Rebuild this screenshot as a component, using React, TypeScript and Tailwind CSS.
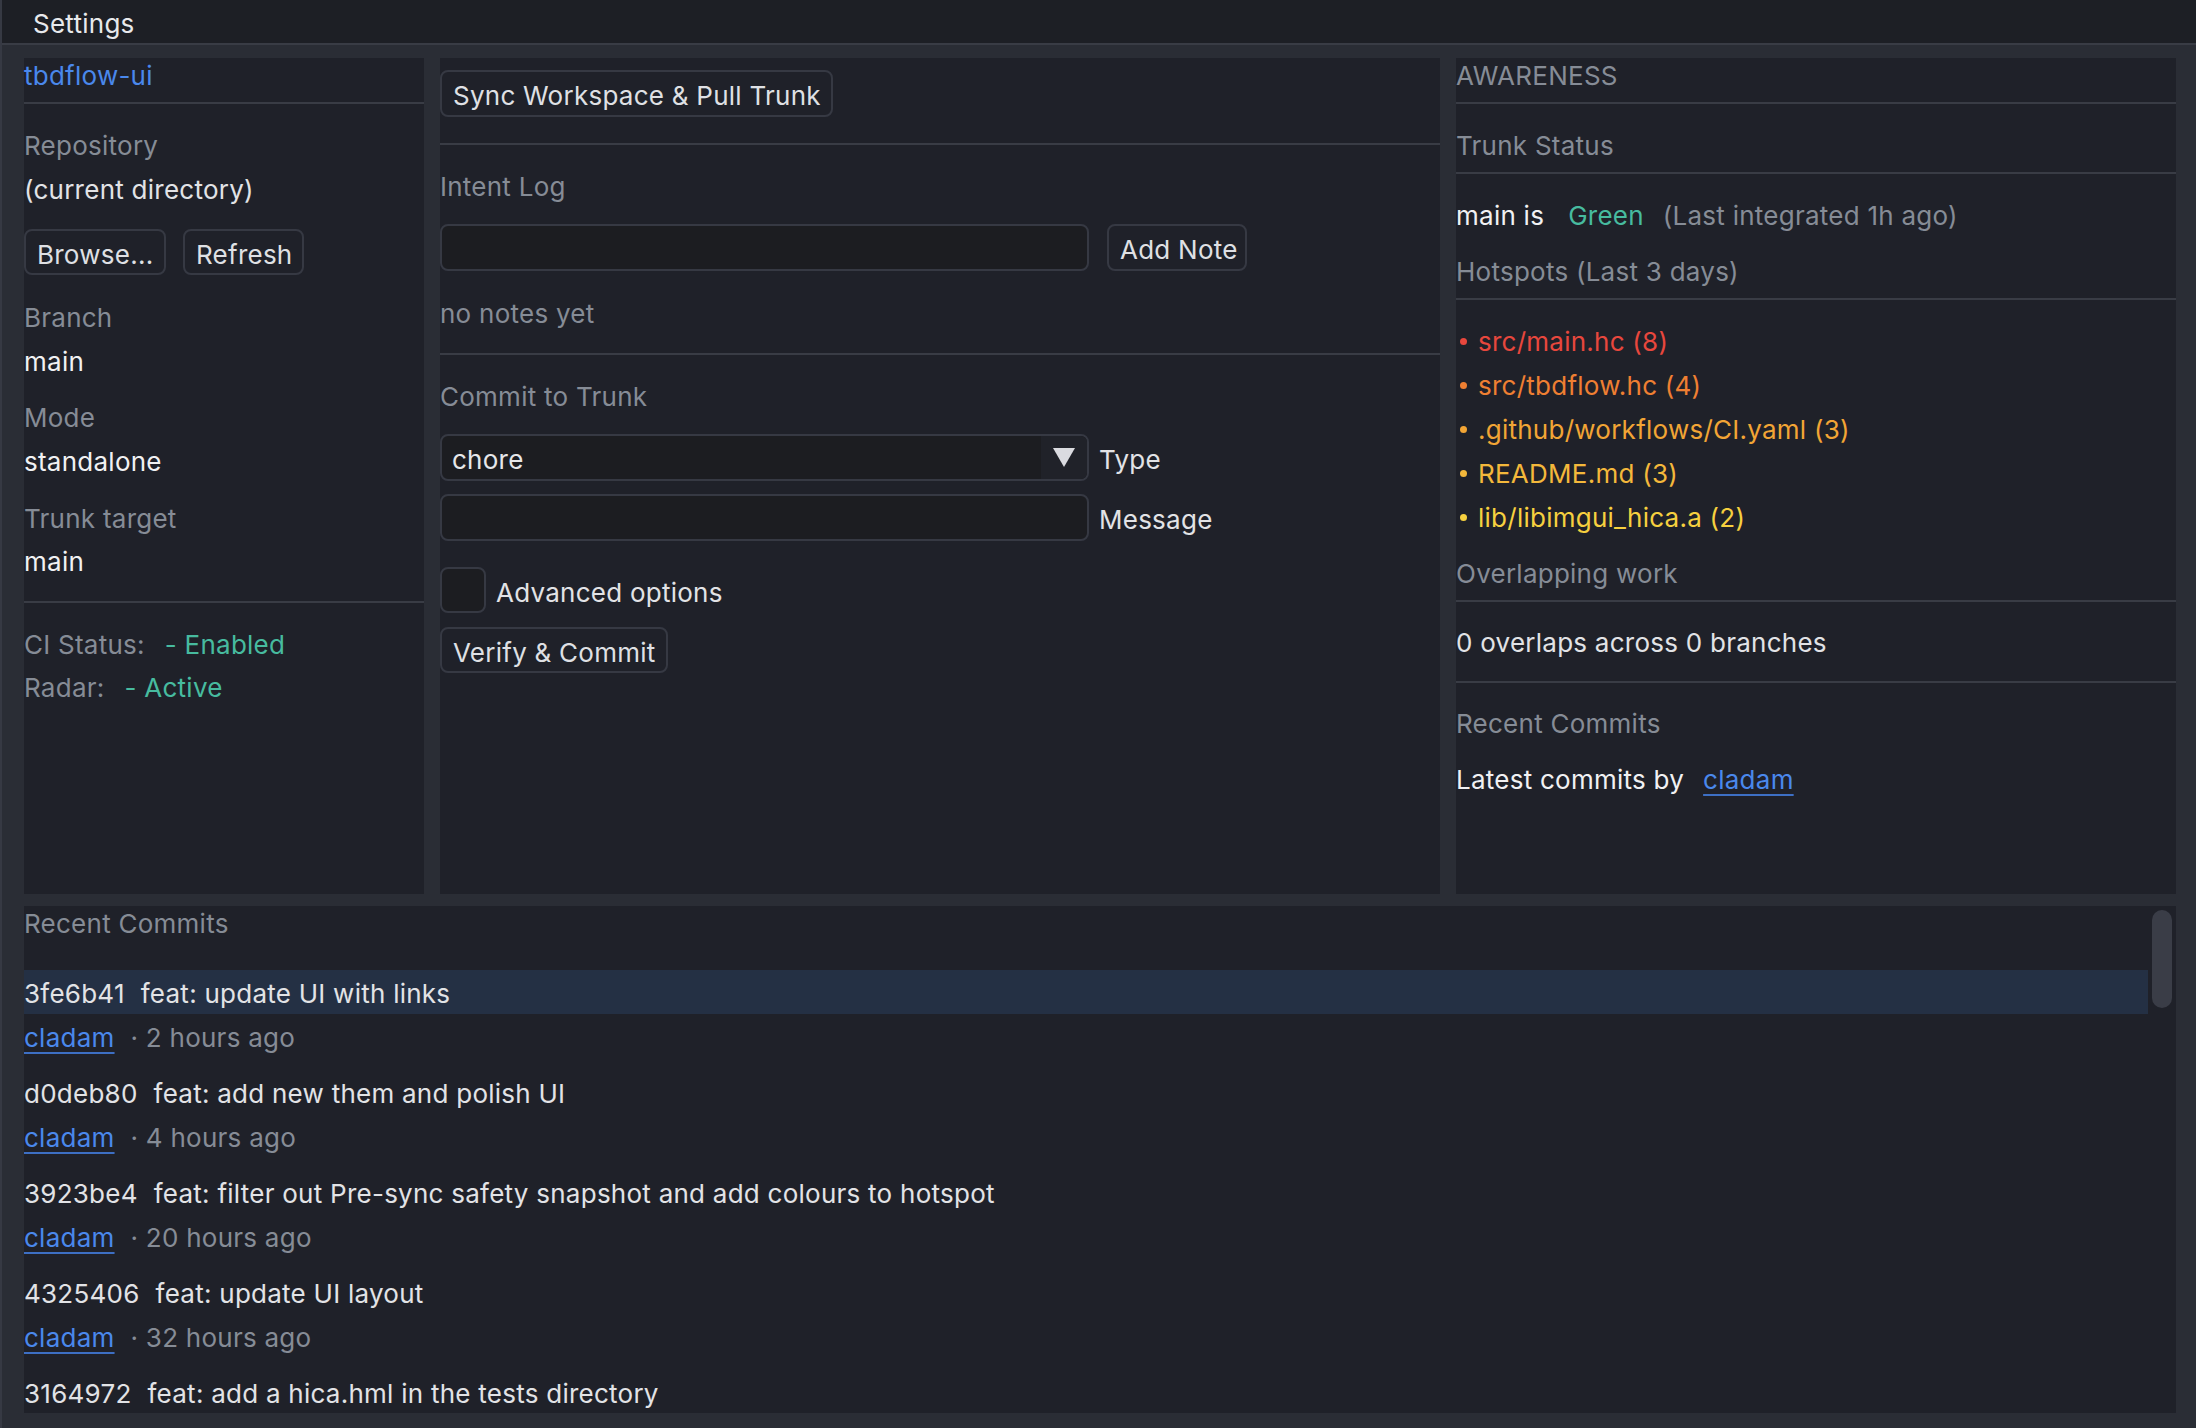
import React from "react";

type Commit = { hash: string; msg: string; ago: string };

const commits: Commit[] = [
  { hash: "3fe6b41", msg: "feat: update UI with links", ago: "2 hours ago" },
  { hash: "d0deb80", msg: "feat: add new them and polish UI", ago: "4 hours ago" },
  { hash: "3923be4", msg: "feat: filter out Pre-sync safety snapshot and add colours to hotspot", ago: "20 hours ago" },
  { hash: "4325406", msg: "feat: update UI layout", ago: "32 hours ago" },
  { hash: "3164972", msg: "feat: add a hica.hml in the tests directory", ago: "" },
];

const hotspots = [
  { file: "src/main.hc (8)", cls: "text-[#e8473d]", dot: "bg-[#e8473d]" },
  { file: "src/tbdflow.hc (4)", cls: "text-[#ef7f32]", dot: "bg-[#ef7f32]" },
  { file: ".github/workflows/CI.yaml (3)", cls: "text-[#f2a535]", dot: "bg-[#f2a535]" },
  { file: "README.md (3)", cls: "text-[#f4b83b]", dot: "bg-[#f4b83b]" },
  { file: "lib/libimgui_hica.a (2)", cls: "text-[#f6d03f]", dot: "bg-[#f6d03f]" },
];

function Rule({ className = "" }: { className?: string }) {
  return <div className={"h-[2px] bg-[#393c45] " + className} />;
}

// One 32px text row; the taller line box sits the glyphs a little lower in the row.
function Line({ children, className = "" }: { children: React.ReactNode; className?: string }) {
  return <div className={"h-[32px] leading-[36px] whitespace-nowrap " + className}>{children}</div>;
}

function Button({ children, className = "" }: { children: React.ReactNode; className?: string }) {
  return (
    <button
      type="button"
      className={
        "h-[46px] px-[11px] pt-[4px] flex items-center rounded-[8px] border-2 border-[#363943] bg-[#1f2129] text-[#dfe0e4] whitespace-nowrap " +
        className
      }
    >
      {children}
    </button>
  );
}

function Field({ className = "" }: { className?: string }) {
  return <div className={"h-[47px] rounded-[8px] border-2 border-[#363943] bg-[#1c1d21] " + className} />;
}

function LeftPanel() {
  return (
    <div className="w-[400px] shrink-0 bg-[#1f2129] flex flex-col">
      <Line className="text-[#4a88ec]">tbdflow-ui</Line>
      <Rule className="mt-[12px]" />
      <Line className="mt-[24px] text-[#868c96]">Repository</Line>
      <Line className="mt-[12px] text-[#e2e3e6]">(current directory)</Line>
      <div className="mt-[25px] flex gap-[17px]">
        <Button className="w-[142px]">Browse...</Button>
        <Button className="w-[121px]">Refresh</Button>
      </div>
      <Line className="mt-[25px] text-[#868c96]">Branch</Line>
      <Line className="mt-[12px] text-[#f1f1f3]">main</Line>
      <Line className="mt-[24px] text-[#868c96]">Mode</Line>
      <Line className="mt-[12px] text-[#f1f1f3]">standalone</Line>
      <Line className="mt-[25px] text-[#868c96]">Trunk target</Line>
      <Line className="mt-[11px] text-[#f1f1f3]">main</Line>
      <Rule className="mt-[25px]" />
      <Line className="mt-[24px] text-[#868c96]">
        CI Status:<span className="ml-[20px] text-[#47bb9f]">- Enabled</span>
      </Line>
      <Line className="mt-[11px] text-[#868c96]">
        Radar:<span className="ml-[20px] text-[#47bb9f]">- Active</span>
      </Line>
    </div>
  );
}

function MiddlePanel() {
  return (
    <div className="w-[1000px] shrink-0 bg-[#1f2129] flex flex-col">
      <div className="mt-[12px] flex">
        <Button className="h-[47px] w-[393px]">Sync Workspace &amp; Pull Trunk</Button>
      </div>
      <Rule className="mt-[26px]" />
      <Line className="mt-[24px] text-[#868c96]">Intent Log</Line>
      <div className="mt-[23px] flex items-center">
        <Field className="w-[649px]" />
        <Button className="ml-[18px] h-[47px] w-[140px]">Add Note</Button>
      </div>
      <Line className="mt-[25px] text-[#868c96]">no notes yet</Line>
      <Rule className="mt-[25px]" />
      <Line className="mt-[24px] text-[#868c96]">Commit to Trunk</Line>
      <div className="mt-[23px] flex items-center">
        <div className="w-[649px] h-[47px] rounded-[8px] border-2 border-[#363943] bg-[#1c1d21] flex overflow-hidden">
          <div className="flex-1 pl-[10px] leading-[47px] text-[#e6e7ea]">chore</div>
          <div className="w-[46px] bg-[#202229] flex items-center justify-center">
            <svg width="22" height="19" viewBox="0 0 22 19">
              <path d="M0 0 H22 L11 19 Z" fill="#dadbe0" />
            </svg>
          </div>
        </div>
        <span className="ml-[10px] pt-[4px] text-[#e2e3e6]">Type</span>
      </div>
      <div className="mt-[13px] flex items-center">
        <Field className="w-[649px]" />
        <span className="ml-[10px] pt-[4px] text-[#e2e3e6]">Message</span>
      </div>
      <div className="mt-[26px] flex items-center">
        <div className="w-[46px] h-[46px] rounded-[8px] border-2 border-[#363943] bg-[#1c1d21]" />
        <span className="ml-[10px] pt-[4px] text-[#e2e3e6]">Advanced options</span>
      </div>
      <div className="mt-[14px] flex">
        <Button className="w-[228px]">Verify &amp; Commit</Button>
      </div>
    </div>
  );
}

function RightPanel() {
  return (
    <div className="flex-1 bg-[#1f2129] flex flex-col">
      <Line className="text-[#868c96]">AWARENESS</Line>
      <Rule className="mt-[12px]" />
      <Line className="mt-[24px] text-[#868c96]">Trunk Status</Line>
      <Rule className="mt-[12px]" />
      <Line className="mt-[24px] text-[#f1f1f3]">
        main is
        <span className="ml-[24px] text-[#47bb9f]">Green</span>
        <span className="ml-[19px] text-[#868c96]">(Last integrated 1h ago)</span>
      </Line>
      <Line className="mt-[24px] text-[#868c96]">Hotspots (Last 3 days)</Line>
      <Rule className="mt-[12px]" />
      <div className="mt-[23px] flex flex-col gap-[12px]">
        {hotspots.map((h) => (
          <div key={h.file} className={"h-[32px] flex items-center whitespace-nowrap " + h.cls}>
            <span className="ml-[4px] mt-[4px] w-[7px] h-[7px] rounded-full shrink-0">
              <span className={"block w-[7px] h-[7px] rounded-full " + h.dot} />
            </span>
            <span className="ml-[11px] pt-[4px]">{h.file}</span>
          </div>
        ))}
      </div>
      <Line className="mt-[25px] text-[#868c96]">Overlapping work</Line>
      <Rule className="mt-[12px]" />
      <Line className="mt-[23px] text-[#e2e3e6]">0 overlaps across 0 branches</Line>
      <Rule className="mt-[24px]" />
      <Line className="mt-[23px] text-[#868c96]">Recent Commits</Line>
      <Line className="mt-[24px] text-[#f1f1f3]">
        Latest commits by
        <span className="ml-[19px] text-[#4a88ec] underline decoration-[#3d6fc4] decoration-2 underline-offset-[5px]">
          cladam
        </span>
      </Line>
    </div>
  );
}

function CommitList() {
  return (
    <div className="h-[507px] bg-[#1f2129] flex overflow-hidden">
      <div className="flex-1 min-w-0 flex flex-col">
        <Line className="text-[#868c96]">Recent Commits</Line>
        <Rule className="mt-[13px]" />
        <div className="mt-[19px] flex flex-col">
          {commits.map((c, i) => (
            <div key={c.hash} className="flex flex-col pb-[18px]">
              <div
                className={
                  "h-[44px] leading-[48px] whitespace-nowrap text-[#e2e3e6] " + (i === 0 ? "bg-[#243044]" : "")
                }
              >
                {c.hash}
                <span className="ml-[16px]">{c.msg}</span>
              </div>
              {c.ago && (
                <Line className="mt-[6px] text-[#868c96]">
                  <span className="text-[#4a88ec] underline decoration-[#3d6fc4] decoration-2 underline-offset-[5px]">
                    cladam
                  </span>
                  <span className="ml-[16px]">· {c.ago}</span>
                </Line>
              )}
            </div>
          ))}
        </div>
      </div>
      <div className="w-[28px] shrink-0 pt-[4px] pl-[4px]">
        <div className="w-[20px] h-[98px] rounded-full bg-[#3a3d47]" />
      </div>
    </div>
  );
}

export default function App() {
  return (
    <div className="w-[2196px] h-[1428px] overflow-hidden bg-[#2a2d35] font-['Inter','Noto_Sans',sans-serif] text-[26px] tracking-[0.25px] text-[#e2e3e6] border-l-2 border-[#363943]">
      <div className="h-[45px] pt-[4px] bg-[#1d1f25] border-b-2 border-[#393c45] flex items-center px-[31px] text-[#e8e9ec]">
        Settings
      </div>
      <div className="pt-[13px] pl-[22px] pr-[20px] flex flex-col gap-[12px]">
        <div className="h-[836px] flex gap-[16px]">
          <LeftPanel />
          <MiddlePanel />
          <RightPanel />
        </div>
        <CommitList />
      </div>
    </div>
  );
}
